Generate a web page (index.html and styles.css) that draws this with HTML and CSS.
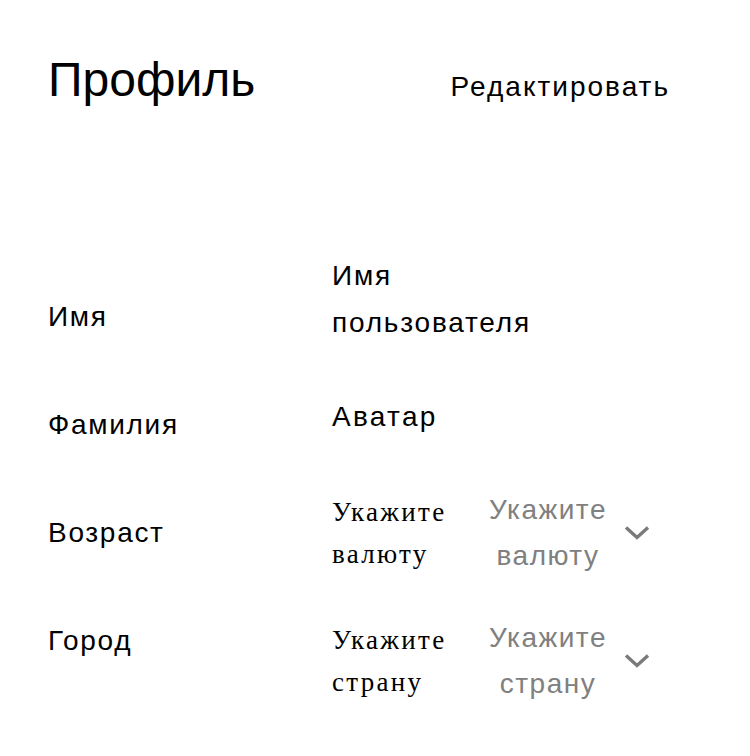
FILE: index.html
```html
<!DOCTYPE html>
<html lang="ru">
<head>
<meta charset="utf-8">
<title>Профиль</title>
<link rel="stylesheet" href="styles.css">
</head>
<body>
<div class="page">
  <header class="header">
    <h1 class="title">Профиль</h1>
    <button class="edit">Редактировать</button>
  </header>
  <div class="form">
    <div class="col-left">
      <div class="label">Имя</div>
      <div class="label">Фамилия</div>
      <div class="label">Возраст</div>
      <div class="label">Город</div>
    </div>
    <div class="col-right">
      <div class="field-name">Имя<br>пользователя</div>
      <div class="field-avatar">Аватар</div>
      <div class="select-row">
        <div class="opt-label">Укажите<br>валюту</div>
        <div class="opt-value">Укажите<br>валюту</div>
        <svg class="chev" width="26" height="16" viewBox="0 0 26 16"><path d="M2 2.5 L13 12.5 L24 2.5" fill="none" stroke="#7a7a7a" stroke-width="3.4"/></svg>
      </div>
      <div class="select-row second">
        <div class="opt-label">Укажите<br>страну</div>
        <div class="opt-value">Укажите<br>страну</div>
        <svg class="chev" width="26" height="16" viewBox="0 0 26 16"><path d="M2 2.5 L13 12.5 L24 2.5" fill="none" stroke="#7a7a7a" stroke-width="3.4"/></svg>
      </div>
    </div>
  </div>
</div>
</body>
</html>
```

FILE: styles.css
```css
html, body {
  margin: 0;
  padding: 0;
  background: #ffffff;
}
body {
  font-family: "Liberation Sans", Arial, sans-serif;
  color: #000000;
}
.page {
  padding: 52px 80px 0 48px;
}
.header {
  display: flex;
  justify-content: space-between;
  align-items: baseline;
}
.title {
  margin: 0;
  font-size: 48px;
  font-weight: normal;
  line-height: 56px;
}
.edit {
  border: none;
  background: none;
  padding: 0;
  font-family: "Liberation Sans", Arial, sans-serif;
  font-size: 28px;
  line-height: 32px;
  letter-spacing: 2px;
  color: #000;
}
.form {
  display: flex;
  margin-top: 144px;
}
.col-left {
  width: 284px;
  padding-top: 11px;
}
.label {
  font-size: 28px;
  line-height: 108px;
  letter-spacing: 1.7px;
}
.col-right {
  display: flex;
  flex-direction: column;
}
.field-name {
  font-size: 28px;
  line-height: 47px;
  letter-spacing: 1.8px;
}
.field-avatar {
  font-size: 28px;
  line-height: 47px;
  letter-spacing: 2.3px;
  margin-top: 47px;
}
.select-row {
  display: flex;
  align-items: center;
  margin-top: 47px;
}
.select-row.second {
  margin-top: 36px;
}
.opt-label {
  width: 150px;
  font-family: "Liberation Serif", "Times New Roman", serif;
  font-size: 27px;
  line-height: 42px;
  letter-spacing: 2.3px;
}
.opt-value {
  width: 132px;
  text-align: center;
  font-size: 28px;
  line-height: 46px;
  letter-spacing: 1.5px;
  color: #808080;
}
.chev {
  margin-left: 10px;
  display: block;
}
```
